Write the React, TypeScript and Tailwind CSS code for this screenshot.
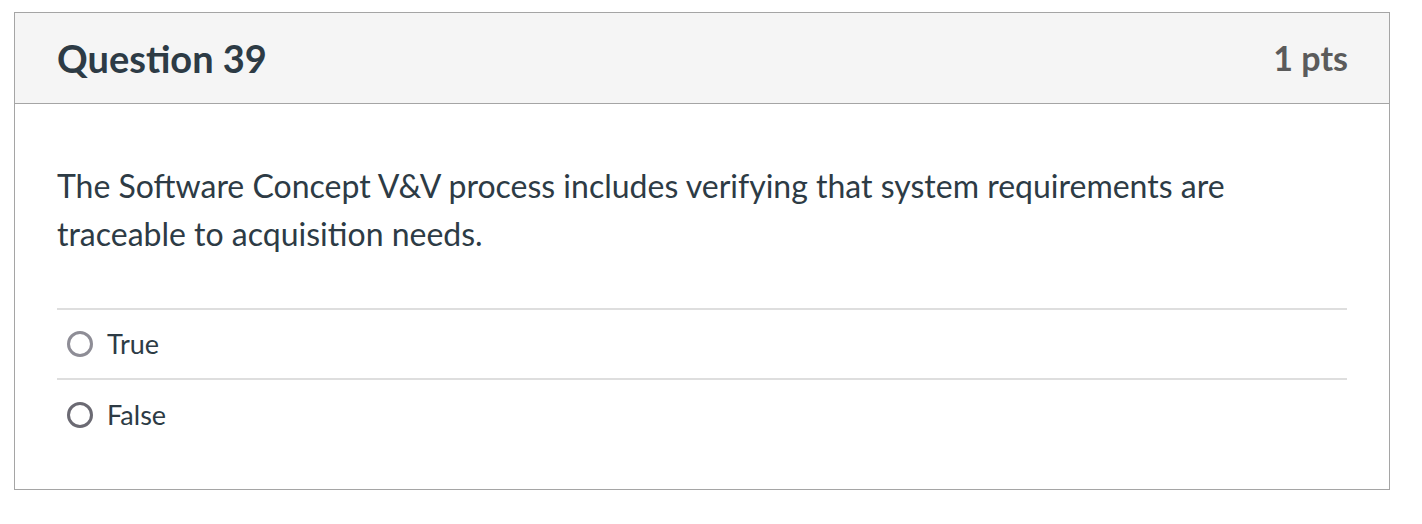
import React from "react";

function Radio({ dark }: { dark?: boolean }) {
  return (
    <span
      className={`inline-block w-[26px] h-[26px] rounded-full border-[3.5px] box-border shrink-0 ${dark ? "border-[#6b6a73]" : "border-[#8e8d96]"}`}
    />
  );
}

export default function App() {
  return (
    <div className="w-[1422px] h-[524px] bg-white pt-[12px] pl-[14px]" style={{ fontFamily: "Lato, 'Liberation Sans', sans-serif" }}>
      <div className="w-[1376px] h-[478px] border-[1.5px] border-[#a5a5a5] flex flex-col">
        <div className="h-[91px] bg-[#f5f5f5] border-b-[1.5px] border-[#a5a5a5] flex items-center justify-between pl-[42px] pr-[41px]">
          <div className="text-[38px] font-bold text-[#2d3b45] leading-none">Question 39</div>
          <div className="text-[34px] font-bold text-[#5b5b5b] leading-none">1 pts</div>
        </div>
        <div className="px-[42px] pt-[58px]">
          <div className="text-[32px] text-[#2d3b45] leading-[48px]">
            The Software Concept V&amp;V process includes verifying that system requirements are
            <br />
            traceable to acquisition needs.
          </div>
          <div className="mt-[50px] border-t-2 border-[#dedede]">
            <div className="h-[70px] flex items-center gap-[14px] pl-[10px] border-b-2 border-[#dedede]">
              <Radio />
              <span className="text-[27px] text-[#2d3b45]">True</span>
            </div>
            <div className="h-[70px] flex items-center gap-[14px] pl-[10px]">
              <Radio dark />
              <span className="text-[27px] text-[#2d3b45]">False</span>
            </div>
          </div>
        </div>
      </div>
    </div>
  );
}
